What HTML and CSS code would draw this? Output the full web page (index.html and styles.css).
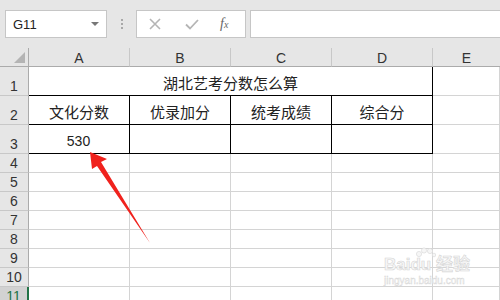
FILE: index.html
```html
<!DOCTYPE html>
<html>
<head>
<meta charset="utf-8">
<link rel="stylesheet" href="styles.css">
</head>
<body>
<div class="bar">
  <div class="namebox"><span class="ref">G11</span><span class="caret"></span></div>
  <div class="dots"><i></i><i></i><i></i></div>
  <div class="fbtns">
    <svg class="ic x" width="14" height="14" viewBox="0 0 14 14"><path d="M2 2L12 12M12 2L2 12" stroke="#b5b5b5" stroke-width="1.6" fill="none"/></svg>
    <svg class="ic ok" width="16" height="14" viewBox="0 0 16 14"><path d="M2 7.5L6 11.5L14 3" stroke="#b5b5b5" stroke-width="1.8" fill="none"/></svg>
    <span class="fx">f<sub>x</sub></span>
  </div>
  <div class="finput"></div>
</div>
<div class="sheet">
  <div class="corner"><span class="tri"></span></div>
  <div class="ch">A</div><div class="ch">B</div><div class="ch">C</div><div class="ch">D</div><div class="ch last">E</div>

  <div class="rh tall">1</div>
  <div class="c tall title b">湖北艺考分数怎么算</div>
  <div class="c tall"></div>

  <div class="rh tall">2</div>
  <div class="c tall b">文化分数</div><div class="c tall b">优录加分</div><div class="c tall b">统考成绩</div><div class="c tall b">综合分</div>
  <div class="c tall"></div>

  <div class="rh tall">3</div>
  <div class="c tall b num">530</div><div class="c tall b"></div><div class="c tall b"></div><div class="c tall b"></div>
  <div class="c tall"></div>

  <div class="rh">4</div><div class="c"></div><div class="c"></div><div class="c"></div><div class="c"></div><div class="c"></div>
  <div class="rh">5</div><div class="c"></div><div class="c"></div><div class="c"></div><div class="c"></div><div class="c"></div>
  <div class="rh">6</div><div class="c"></div><div class="c"></div><div class="c"></div><div class="c"></div><div class="c"></div>
  <div class="rh">7</div><div class="c"></div><div class="c"></div><div class="c"></div><div class="c"></div><div class="c"></div>
  <div class="rh">8</div><div class="c"></div><div class="c"></div><div class="c"></div><div class="c"></div><div class="c"></div>
  <div class="rh">9</div><div class="c"></div><div class="c"></div><div class="c"></div><div class="c"></div><div class="c"></div>
  <div class="rh">10</div><div class="c"></div><div class="c"></div><div class="c"></div><div class="c"></div><div class="c"></div>
  <div class="rh sel">11</div><div class="c"></div><div class="c"></div><div class="c"></div><div class="c"></div><div class="c"></div>
</div>
<div class="wm">
  <svg class="paw" width="22" height="12" viewBox="0 0 22 12">
    <circle cx="5" cy="7" r="2.6"/><circle cx="10" cy="3.5" r="2.6"/><circle cx="16" cy="4" r="2.6"/><circle cx="20" cy="8" r="1.8"/>
  </svg>
  <div class="wm1">Baidu 经验</div>
  <div class="wm2">jingyan.baidu.com</div>
</div>
<svg class="arrow" width="500" height="300" viewBox="0 0 500 300">
  <polygon points="90,152 107,159 101,162 150,243 97,166 92,169" fill="#f0221d"/>
</svg>
</body>
</html>
```

FILE: styles.css
```css
html, body {
  margin: 0;
  padding: 0;
  width: 500px;
  height: 300px;
  overflow: hidden;
  background: #e6e6e6;
  font-family: "Noto Sans CJK SC", "Liberation Sans", sans-serif;
  position: relative;
}
.bar {
  height: 48px;
  display: flex;
  align-items: flex-start;
  padding-top: 10px;
  box-sizing: border-box;
}
.namebox {
  margin-left: 5px;
  width: 102px;
  height: 28px;
  box-sizing: border-box;
  background: #fff;
  border: 1px solid #c6c6c6;
  display: flex;
  align-items: center;
  justify-content: space-between;
  padding: 0 6px 0 7px;
}
.ref {
  font-family: "Liberation Sans", sans-serif;
  font-size: 13px;
  color: #222;
}
.caret {
  width: 0;
  height: 0;
  border-left: 4px solid transparent;
  border-right: 4px solid transparent;
  border-top: 4px solid #777;
  margin-right: 1px;
}
.dots {
  width: 3px;
  margin-left: 14px;
  height: 28px;
  display: flex;
  flex-direction: column;
  justify-content: center;
  gap: 2px;
}
.dots i {
  display: block;
  width: 2px;
  height: 2px;
  background: #a8a8a8;
}
.fbtns {
  margin-left: 12px;
  width: 110px;
  height: 28px;
  box-sizing: border-box;
  background: #fff;
  border: 1px solid #c6c6c6;
  display: flex;
  align-items: center;
  padding-left: 11px;
}
.ic.ok { margin-left: 22px; }
.fx {
  margin-left: 20px;
  font-family: "Liberation Serif", serif;
  font-style: italic;
  font-size: 14px;
  color: #666;
  line-height: 1;
}
.fx sub {
  font-size: 10px;
  vertical-align: 0;
}
.finput {
  margin-left: 4px;
  flex: 1;
  height: 28px;
  box-sizing: border-box;
  background: #fff;
  border: 1px solid #c6c6c6;
  border-right: none;
}
.sheet {
  display: grid;
  grid-template-columns: 29px 101px 101px 101px 101px 1fr;
  grid-template-rows: 19px 29px 29px 29px repeat(8, 19px);
  background: #fff;
}
.sheet > div {
  box-sizing: border-box;
}
.corner {
  background: #e6e6e6;
  border-right: 1px solid #ababab;
  border-bottom: 1px solid #ababab;
  position: relative;
}
.tri {
  position: absolute;
  right: 3px;
  bottom: 3px;
  width: 0;
  height: 0;
  border-left: 11px solid transparent;
  border-bottom: 11px solid #b4b4b4;
}
.ch {
  background: #e6e6e6;
  border-right: 1px solid #c8c8c8;
  border-bottom: 1px solid #ababab;
  display: flex;
  align-items: center;
  justify-content: center;
  font-family: "Liberation Sans", sans-serif;
  font-size: 14px;
  color: #333;
  padding-top: 1px;
}
.ch.last { border-right: none; }
.rh {
  background: #e6e6e6;
  border-right: 1px solid #ababab;
  border-bottom: 1px solid #c8c8c8;
  display: flex;
  align-items: center;
  justify-content: center;
  font-family: "Liberation Sans", sans-serif;
  font-size: 14px;
  color: #333;
}
.rh.tall {
  align-items: flex-end;
  padding-bottom: 1px;
}
.rh.sel {
  background: #d2d2d2;
  border-right: 2px solid #217346;
  color: #217346;
}
.c {
  border-right: 1px solid #d4d4d4;
  border-bottom: 1px solid #d4d4d4;
  display: flex;
  align-items: center;
  justify-content: center;
  font-size: 15px;
  color: #222;
}
.c.tall {
  padding-top: 3px;
}
.c.b {
  border-right-color: #000;
  border-bottom-color: #000;
}
.title {
  grid-column: span 4;
}
.num {
  font-family: "Liberation Sans", sans-serif;
  font-size: 14px;
  padding-top: 0;
  padding-right: 1px;
}
.wm {
  position: absolute;
  left: 384px;
  top: 247px;
  width: 100px;
  white-space: nowrap;
  color: #f6f6f6;
  -webkit-text-stroke: 0.6px #d6d6d6;
  font-family: "Liberation Sans", "Noto Sans CJK SC", sans-serif;
  line-height: 1;
}
.paw {
  display: block;
  margin-left: 30px;
  fill: #f6f6f6;
  stroke: #d6d6d6;
  stroke-width: 0.6;
}
.wm1 {
  font-size: 17px;
  font-weight: bold;
  margin-top: -3px;
}
.wm2 {
  font-size: 10px;
  margin-top: 3px;
  -webkit-text-stroke: 0.4px #d6d6d6;
}
.arrow {
  position: absolute;
  left: 0;
  top: 0;
  pointer-events: none;
}
```
